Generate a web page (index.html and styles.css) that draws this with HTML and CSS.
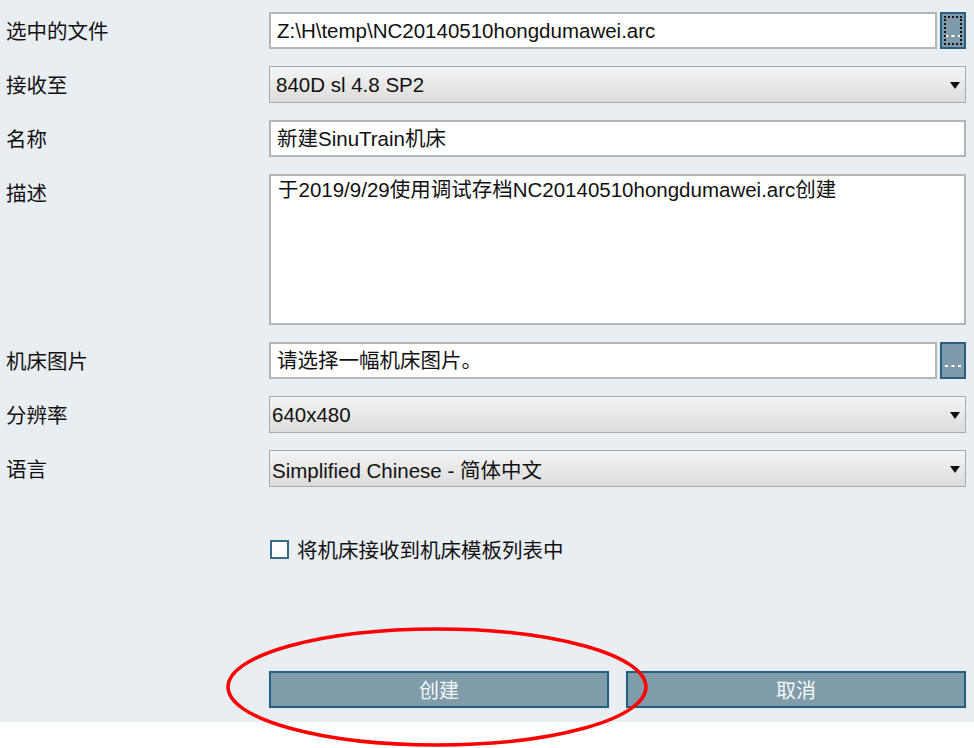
FILE: index.html
```html
<!DOCTYPE html>
<html lang="zh-CN">
<head>
<meta charset="utf-8">
<title>新建SinuTrain机床</title>
<link rel="stylesheet" href="styles.css">
</head>
<body>
<div class="panel">
  <div class="form">
    <div class="row">
      <div class="lbl">选中的文件</div>
      <div class="ctrl">
        <div class="field">Z:\H\temp\NC20140510hongdumawei.arc</div>
        <div class="browse focus"><svg class="dots" width="18" height="4" viewBox="0 0 18 4"><path d="M1 2h3M7.5 2h3M14 2h3" stroke="#fff" stroke-width="2"/></svg></div>
      </div>
    </div>
    <div class="row">
      <div class="lbl">接收至</div>
      <div class="ctrl">
        <div class="select"><span>840D sl 4.8 SP2</span><span class="arrow"></span></div>
      </div>
    </div>
    <div class="row">
      <div class="lbl">名称</div>
      <div class="ctrl">
        <div class="field">新建SinuTrain机床</div>
      </div>
    </div>
    <div class="row tall">
      <div class="lbl">描述</div>
      <div class="ctrl">
        <div class="field area">于2019/9/29使用调试存档NC20140510hongdumawei.arc创建</div>
      </div>
    </div>
    <div class="row">
      <div class="lbl">机床图片</div>
      <div class="ctrl">
        <div class="field">请选择一幅机床图片。</div>
        <div class="browse"><svg class="dots" width="18" height="4" viewBox="0 0 18 4"><path d="M1 2h3M7.5 2h3M14 2h3" stroke="#fff" stroke-width="2"/></svg></div>
      </div>
    </div>
    <div class="row">
      <div class="lbl">分辨率</div>
      <div class="ctrl">
        <div class="select narrow"><span>640x480</span><span class="arrow"></span></div>
      </div>
    </div>
    <div class="row last">
      <div class="lbl">语言</div>
      <div class="ctrl">
        <div class="select narrow"><span>Simplified Chinese - 简体中文</span><span class="arrow"></span></div>
      </div>
    </div>
  </div>
  <div class="check-row">
    <span class="box"></span>
    <span class="check-text">将机床接收到机床模板列表中</span>
  </div>
  <div class="actions">
    <div class="btn">创建</div>
    <div class="btn">取消</div>
  </div>
</div>
<svg class="annot" width="974" height="748" viewBox="0 0 974 748">
  <ellipse cx="437" cy="687" rx="209" ry="58" fill="none" stroke="#f00" stroke-width="3.5"/>
</svg>
</body>
</html>
```
FILE: styles.css
```css
html, body {
  margin: 0;
  padding: 0;
  background: #ffffff;
}
body {
  width: 974px;
  height: 748px;
  position: relative;
  overflow: hidden;
  font-family: "Liberation Sans", "Noto Sans CJK SC", sans-serif;
  color: #111;
}
.panel {
  background: #e9eef3;
  height: 722px;
  box-sizing: border-box;
  padding: 12px 8px 0 0;
  display: flex;
  flex-direction: column;
}
.form {
  display: flex;
  flex-direction: column;
}
.row {
  display: flex;
  height: 37px;
  margin-bottom: 17px;
}
.row.tall {
  height: 151px;
}
.row.last {
  margin-bottom: 0;
}
.lbl {
  width: 263px;
  padding-left: 6px;
  font-family: "Noto Sans CJK SC", sans-serif;
  font-size: 20.5px;
  line-height: 37px;
  color: #111;
}
.ctrl {
  flex: 1;
  display: flex;
}
.field {
  flex: 1;
  box-sizing: border-box;
  height: 100%;
  background: #fff;
  border: 2px solid #b5b5b5;
  padding-left: 6px;
  font-size: 20.5px;
  line-height: 33px;
  white-space: nowrap;
  overflow: hidden;
}
.field.area {
  line-height: 28px;
  padding-top: 0;
  padding-left: 7px;
}
.browse {
  width: 26px;
  margin-left: 3px;
  box-sizing: border-box;
  height: 100%;
  background: #7f9aab;
  border: 2px solid #2b5e7e;
  display: flex;
  align-items: center;
  justify-content: center;
  position: relative;
}
.browse .dots {
  position: absolute;
  top: 20px;
  left: 2px;
}
.browse.focus::after {
  content: "";
  position: absolute;
  left: 2px;
  top: 2px;
  right: 2px;
  bottom: 2px;
  border: 2px dotted #111;
}
.select {
  flex: 1;
  box-sizing: border-box;
  height: 100%;
  border: 1px solid #aaaaaa;
  background: linear-gradient(#f4f4f4, #dcdcdc);
  display: flex;
  align-items: center;
  justify-content: space-between;
  padding-left: 6px;
  padding-right: 5px;
  font-size: 20.5px;
  white-space: nowrap;
}
.select.narrow {
  padding-left: 2px;
}
.arrow {
  width: 0;
  height: 0;
  border-left: 5px solid transparent;
  border-right: 5px solid transparent;
  border-top: 7px solid #111;
  margin-top: 2px;
}
.check-row {
  margin-top: 47px;
  height: 30px;
  display: flex;
  align-items: center;
  padding-left: 270px;
}
.box {
  width: 19px;
  height: 19px;
  box-sizing: border-box;
  border: 2px solid #3b6a88;
  background: #fff;
}
.check-text {
  margin-left: 8px;
  font-family: "Noto Sans CJK SC", sans-serif;
  font-size: 20.5px;
  line-height: 30px;
  color: #111;
}
.actions {
  margin-top: 107px;
  padding-left: 269px;
  display: flex;
  gap: 17px;
}
.btn {
  width: 341px;
  height: 37px;
  box-sizing: border-box;
  background: #809cab;
  border: 2px solid #24607f;
  box-shadow: 0 0 0 1px #dfe8ee;
  color: #f6f9fb;
  font-family: "Noto Sans CJK SC", sans-serif;
  font-size: 20px;
  line-height: 33px;
  text-align: center;
}
.annot {
  position: absolute;
  left: 0;
  top: 0;
  pointer-events: none;
}
```
